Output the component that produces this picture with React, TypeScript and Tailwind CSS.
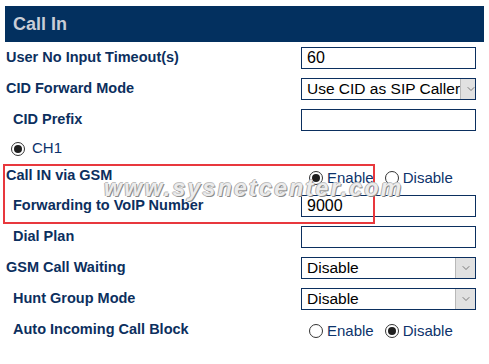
import { ChevronDown } from "lucide-react"

const font = { fontFamily: '"Liberation Sans", Arial, sans-serif' }

function Label({ text, sub }: { text: string; sub?: boolean }) {
  return (
    <span className={sub ? "pl-[13px] text-[14.5px] font-bold text-[#0c2f5e]" : "pl-[6px] text-[14.5px] font-bold text-[#0c2f5e]"}>
      {text}
    </span>
  )
}

function TextBox({ value }: { value?: string }) {
  return (
    <div className="flex h-[22px] w-[175px] items-center border border-[#0b2f5f] bg-white pl-[5px] text-[16px] text-black">
      {value}
    </div>
  )
}

function Select({ value }: { value: string }) {
  return (
    <div className="flex h-[22px] w-[175px] items-center overflow-hidden border border-[#0b2f5f] bg-white text-[15.5px] text-black">
      <span className="flex-1 whitespace-nowrap pl-[5px]">{value}</span>
      <span className="flex h-[20px] w-[20px] shrink-0 items-center justify-center border-l border-[#b8b8b8] bg-[#e1e1e1]">
        <ChevronDown className="h-[12px] w-[12px] text-[#555]" strokeWidth={1.5} />
      </span>
    </div>
  )
}

function Radio({ checked, label, wide }: { checked?: boolean; label: string; wide?: boolean }) {
  return (
    <span className={wide ? "flex items-center gap-[7px] text-[15px] text-[#0d336b]" : "flex items-center gap-[4px] text-[15px] text-[#0d336b]"}>
      <span className="flex h-[14px] w-[14px] items-center justify-center rounded-full border border-[#333] bg-white">
        {checked && <span className="h-[8px] w-[8px] rounded-full bg-[#1e1e1e]" />}
      </span>
      {label}
    </span>
  )
}

function Row({ children, h = "h-[31px]" }: { children: React.ReactNode; h?: string }) {
  return <div className={`flex items-center ${h}`}>{children}</div>
}

function Control({ children }: { children: React.ReactNode }) {
  return <div className="ml-auto mr-[13px] flex w-[175px] items-center">{children}</div>
}

export default function App() {
  return (
    <div className="h-[364px] w-[489px] overflow-hidden bg-white pt-[6px]" style={font}>
      <div className="mx-[5px] flex h-[36px] items-center bg-[#03305f] pl-[8px] text-[18px] font-bold text-[#c9cdd6]">
        Call In
      </div>

      <Row>
        <Label text="User No Input Timeout(s)" />
        <Control><TextBox value="60" /></Control>
      </Row>
      <Row>
        <Label text="CID Forward Mode" />
        <Control><Select value="Use CID as SIP Caller" /></Control>
      </Row>
      <Row>
        <Label text="CID Prefix" sub />
        <Control><TextBox /></Control>
      </Row>
      <Row h="h-[27px]">
        <span className="pl-[11px]"><Radio checked wide label="CH1" /></span>
      </Row>

      <div className="relative">
        <Row h="h-[28px]">
          <Label text="Call IN via GSM" />
          <Control>
            <span className="flex gap-[11px] pl-[8px] pt-[4px]">
              <Radio checked label="Enable" />
              <Radio label="Disable" />
            </span>
          </Control>
        </Row>
        <Row>
          <Label text="Forwarding to VoIP Number" sub />
          <Control><TextBox value="9000" /></Control>
        </Row>
        <div className="pointer-events-none absolute left-[3px] top-[2px] h-[60px] w-[372px] border-2 border-[#e8383d]" />
        <div
          className="pointer-events-none absolute left-[104px] top-[9px] text-[23px] font-bold italic tracking-[2.3px] text-[#ececec]"
          style={{ textShadow: "1px 1px 0 #8a8a8a, -1px 0 0 #b0b0b0, 0 -1px 0 #c0c0c0" }}
        >
          www.sysnetcenter.com
        </div>
      </div>

      <Row>
        <Label text="Dial Plan" sub />
        <Control><TextBox /></Control>
      </Row>
      <Row>
        <Label text="GSM Call Waiting" />
        <Control><Select value="Disable" /></Control>
      </Row>
      <Row>
        <Label text="Hunt Group Mode" sub />
        <Control><Select value="Disable" /></Control>
      </Row>
      <Row>
        <Label text="Auto Incoming Call Block" sub />
        <Control>
          <span className="flex gap-[11px] pl-[8px] pt-[3px]">
            <Radio label="Enable" />
            <Radio checked label="Disable" />
          </span>
        </Control>
      </Row>
    </div>
  )
}
